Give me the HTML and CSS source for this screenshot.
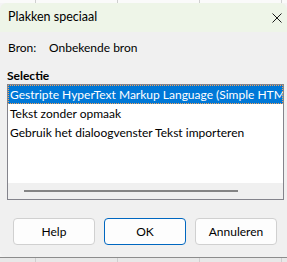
FILE: index.html
```html
<!DOCTYPE html>
<html lang="nl">

<head>
    <meta charset="UTF-8">
    <title>Plakken speciaal</title>
    <link rel="stylesheet" href="styles.css">
</head>

<body>
    <!-- achtergrond boven het venster -->
    <div class="backdrop top"><span></span><span></span><span></span><span></span></div>

    <div class="dialog">
        <div class="titlebar">
            <span class="title">Plakken speciaal</span>
            <svg class="close" width="10" height="10" viewBox="0 0 10 10">
                <path d="M0.5 0.5 L9.5 9.5 M9.5 0.5 L0.5 9.5" stroke="#1a1a1a" stroke-width="1" fill="none" />
            </svg>
        </div>

        <div class="content">
            <div class="source">
                <span class="source-label">Bron:</span>
                <span>Onbekende bron</span>
            </div>

            <p class="group-label">Selectie</p>
            <div class="listbox">
                <ul class="items">
                    <li class="active">Gestripte HyperText Markup Language (Simple HTML)</li>
                    <li>Tekst zonder opmaak</li>
                    <li>Gebruik het dialoogvenster Tekst importeren</li>
                </ul>
                <div class="hscroll"><span class="thumb"></span></div>
            </div>

            <div class="buttons">
                <button class="btn">Help</button>
                <button class="btn default">OK</button>
                <button class="btn">Annuleren</button>
            </div>
        </div>
    </div>

    <div class="backdrop bottom"><span></span><span></span><span></span><span></span></div>
</body>

</html>
```
FILE: styles.css
```css
* {
    padding: 0;
    margin: 0;
    list-style: none;
    box-sizing: border-box;
}

body {
    width: 287px;
    height: 262px;
    overflow: hidden;
    background: #f4f4f4;
    font-family: Lato, "Noto Sans", sans-serif;
    font-size: 12px;
    color: #000;
}

/* strook achter het venster */
.backdrop {
    display: flex;
    height: 3px;
    background: #fafafa;
}

.backdrop span {
    width: 82px;
    border-right: 1px solid #cfcfcf;
}

.backdrop span:first-child {
    width: 36px;
}

.backdrop.bottom {
    height: 5px;
    background: #e8e8e8;
    border-top: 1px solid #8c8c8c;
}

.dialog {
    height: 254px;
    background: #f0f0f0;
    border-radius: 7px 7px 0 6px;
    overflow: hidden;
    display: flex;
    flex-direction: column;
}

.titlebar {
    height: 29px;
    background: #eef5e8;
    display: flex;
    align-items: center;
    justify-content: space-between;
    padding: 0 5px 0 8px;
}

.titlebar .title {
    font-size: 12.5px;
    line-height: 16px;
    margin-top: -1px;
}

.titlebar .close {
    margin-top: 1px;
}

.content {
    flex: 1;
    padding: 8px 3px 0 7px;
}

.source {
    display: flex;
    line-height: 16px;
    padding-left: 1px;
}

.source-label {
    width: 41px;
}

.group-label {
    font-weight: bold;
    line-height: 16px;
    margin-top: 12px;
}

.listbox {
    width: 277px;
    height: 116px;
    background: #fff;
    border: 1px solid #84848c;
    display: flex;
    flex-direction: column;
    overflow: hidden;
}

.items {
    flex: 1;
    white-space: nowrap;
}

.items li {
    height: 19px;
    line-height: 19px;
    padding-left: 2px;
}

.items .active {
    background: #0078d7;
    color: #fff;
    outline: 1px dotted #f4a35a;
    outline-offset: -1px;
}

.hscroll {
    height: 16px;
    background: #f0f0f0;
    padding: 7px 0 0 16px;
}

.hscroll .thumb {
    display: block;
    width: 214px;
    height: 2px;
    background: #858585;
}

.buttons {
    display: flex;
    gap: 9px;
    margin-top: 18px;
    padding-left: 6px;
}

.btn {
    width: 82px;
    height: 27px;
    font-family: inherit;
    font-size: 12px;
    color: #000;
    background: #fdfdfd;
    border: 1px solid #d0d0d0;
    border-radius: 4px;
}

.btn.default {
    border-color: #0067c0;
}
```
